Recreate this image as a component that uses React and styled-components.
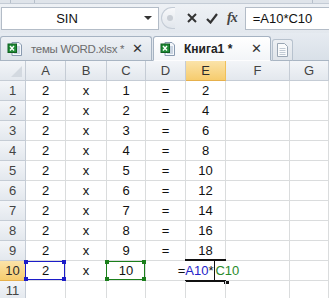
import React from 'react';
import styled, { createGlobalStyle } from 'styled-components';

const GlobalStyle = createGlobalStyle`
  html, body { margin: 0; padding: 0; background: #fff; }
  body { font-family: "Liberation Sans", Arial, sans-serif; }
`;

const Page = styled.div`
  width: 329px;
  height: 298px;
  overflow: hidden;
  background: #fff;
  display: flex;
  flex-direction: column;
`;

const TopStrip = styled.div`
  height: 4px;
  flex: none;
  background: #dfe4ea;
  border-bottom: 1px solid #c3cbd5;
  display: flex;
  box-sizing: border-box;
`;

const StripCell = styled.div`
  width: ${p => p.$w}px;
  border-right: 1px solid #b6bfca;
`;

const FormulaBar = styled.div`
  height: 29px;
  flex: none;
  box-sizing: border-box;
  display: flex;
  align-items: center;
  padding: 2px 0 3px 1px;
  background: linear-gradient(#eef1f5, #e3e8ee);
`;

const NameBox = styled.div`
  width: 158px;
  height: 23px;
  box-sizing: border-box;
  background: #fff;
  border: 1px solid #b3bcc7;
  display: flex;
  align-items: center;
  font-size: 13px;
  color: #111;
`;

const NameText = styled.span`
  flex: 1;
  text-align: center;
  padding-right: 12px;
`;

const DropArrow = styled.span`
  width: 0;
  height: 0;
  margin-right: 6px;
  border-left: 4px solid transparent;
  border-right: 4px solid transparent;
  border-top: 4px solid #333;
`;

const Grip = styled.div`
  width: 14px;
  height: 22px;
  margin-left: 2px;
  box-sizing: border-box;
  border: 1px solid #c4ccd6;
  border-radius: 11px 0 0 11px;
  border-right: none;
  background: linear-gradient(#f7f8fa, #e1e6ec);
  display: flex;
  align-items: center;
  justify-content: center;
  &::after {
    content: '';
    width: 6px;
    height: 6px;
    border-radius: 50%;
    background: #c9ced5;
    margin-left: 3px;
  }
`;

const BarButtons = styled.div`
  display: flex;
  align-items: center;
  gap: 9px;
  padding: 0 8px 0 12px;
  height: 22px;
`;

const FxText = styled.span`
  font-family: "Liberation Serif", "Times New Roman", serif;
  font-style: italic;
  font-weight: bold;
  font-size: 14px;
  color: #444;
  letter-spacing: -1px;
`;

const FormulaInput = styled.div`
  flex: 1;
  height: 23px;
  box-sizing: border-box;
  background: #fff;
  border: 1px solid #b3bcc7;
  border-right: none;
  display: flex;
  align-items: center;
  padding-left: 7px;
  font-size: 13px;
  color: #111;
`;

const TabBar = styled.div`
  height: 28px;
  flex: none;
  box-sizing: border-box;
  display: flex;
  align-items: flex-end;
  background: linear-gradient(#e6ebf1, #d9e0e8);
  border-bottom: 1px solid #a9b5c3;
`;

const Tab = styled.div`
  width: ${p => p.$w}px;
  height: 25px;
  flex: none;
  box-sizing: border-box;
  margin-bottom: -1px;
  margin-right: 1px;
  display: flex;
  align-items: center;
  gap: 8px;
  padding: 0 8px 0 6px;
  border: 1px solid #a6b3c2;
  border-bottom: ${p => (p.$active ? '1px solid #fdfdfe' : '1px solid #a9b5c3')};
  border-radius: 3px 3px 0 0;
  background: ${p => (p.$active ? 'linear-gradient(#ffffff, #f3f5f8)' : 'linear-gradient(#eef1f5, #dde3ea)')};
  font-size: 12px;
  color: ${p => (p.$active ? '#222' : '#6d6d6d')};
  font-weight: ${p => (p.$active ? 'bold' : 'normal')};
  svg { flex: none; }
`;

const TabLabel = styled.span`
  flex: 1;
  min-width: 0;
  white-space: nowrap;
  font-size: ${p => (p.$small ? '11.5px' : '12px')};
  letter-spacing: ${p => (p.$small ? '-0.3px' : '0')};
`;

const TabClose = styled.span`
  flex: none;
  font-size: 13px;
  color: #333;
  font-weight: normal;
`;

const NewTab = styled.div`
  width: 21px;
  height: 22px;
  box-sizing: border-box;
  margin-bottom: -1px;
  border: 1px solid #b7c2ce;
  border-bottom: 1px solid #a9b5c3;
  border-radius: 3px 3px 0 0;
  background: linear-gradient(#edf0f4, #dfe4ea);
  display: flex;
  align-items: center;
  justify-content: center;
`;

const Sheet = styled.div`
  display: grid;
  grid-template-columns: 26px 40px 41px 39px 40px 40px 64px 1fr;
  grid-auto-rows: 20px;
  flex: none;
`;

const Corner = styled.div`
  box-sizing: border-box;
  background: linear-gradient(#f3f5f8, #e3e8ee);
  border-right: 1px solid #c5ccd5;
  border-bottom: 1px solid #c5ccd5;
  position: relative;
  &::after {
    content: '';
    position: absolute;
    right: 3px;
    bottom: 3px;
    border-left: 11px solid transparent;
    border-bottom: 11px solid #d3d9e0;
  }
`;

const Head = styled.div`
  box-sizing: border-box;
  display: flex;
  align-items: center;
  justify-content: center;
  font-size: 13px;
  color: ${p => (p.$sel ? '#2b2b2b' : '#444')};
  background: ${p => (p.$sel ? 'linear-gradient(#fbe3a9, #f6cc6e)' : 'linear-gradient(#f3f5f8, #e3e8ee)')};
  border-right: 1px solid ${p => (p.$sel ? '#f0c05a' : '#c5ccd5')};
  border-bottom: 1px solid ${p => (p.$sel ? '#e6b04c' : '#c5ccd5')};
`;

const Cell = styled.div`
  box-sizing: border-box;
  position: relative;
  display: flex;
  align-items: center;
  justify-content: center;
  white-space: nowrap;
  font-size: 13px;
  color: #111;
  border-right: 1px solid ${p => (p.$noRight ? 'transparent' : '#dadcdd')};
  border-bottom: 1px solid #dadcdd;
`;

const RefBox = styled.div`
  position: absolute;
  left: -1px;
  top: 0;
  right: 0;
  bottom: 0;
  border: 1px solid ${p => p.$color};
  pointer-events: none;
`;

const Handle = styled.span`
  position: absolute;
  width: 4px;
  height: 4px;
  background: ${p => p.$color};
  ${p => (p.$top ? 'top: -2px;' : 'bottom: -2px;')}
  ${p => (p.$left ? 'left: -2px;' : 'right: -2px;')}
`;

const EditLine = styled.div`
  position: absolute;
  left: -1px;
  right: -1px;
  height: 2px;
  background: #111;
  ${p => (p.$top ? 'top: -2px;' : 'bottom: -2px;')}
`;

const FillHandle = styled.span`
  position: absolute;
  right: -4px;
  bottom: -4px;
  width: 5px;
  height: 4px;
  background: #111;
`;

const EditText = styled.span`
  position: relative;
  z-index: 1;
  display: flex;
  align-items: center;
  margin-left: 6px;
`;

const Part = styled.span`
  color: ${p => p.$color || '#111'};
`;

const Caret = styled.span`
  display: inline-block;
  width: 1px;
  height: 22px;
  margin: 0 0 0 1px;
  background: #111;
`;

const XlsIcon = () => (
  <svg width="16" height="16" viewBox="0 0 16 16">
    <path d="M5 1.5h7l2.5 2.5v10.5H5z" fill="#f4f7fb" stroke="#8a9bb0" />
    <path d="M7 6h6M7 8h6M7 10h6M7 12h6" stroke="#9fb1c6" strokeWidth="1" />
    <rect x="1" y="3" width="8.5" height="8.5" fill="#1f8a35" stroke="#0f5f20" />
    <path d="M3 5l4 4.5M7 5l-4 4.5" stroke="#fff" strokeWidth="1.4" />
  </svg>
);

const DocIcon = () => (
  <svg width="11" height="14" viewBox="0 0 11 14">
    <path d="M0.5 0.5h7l3 3v10h-10z" fill="#fafbfc" stroke="#9aa6b4" />
    <path d="M2.5 5.5h6M2.5 7.5h6M2.5 9.5h6M2.5 11.5h6" stroke="#c1cad4" />
  </svg>
);

const cols = ['A', 'B', 'C', 'D', 'E', 'F', 'G'];

const RefCell = ({ value, color }) => (
  <Cell>
    {value}
    <RefBox $color={color}>
      <Handle $color={color} $top $left />
      <Handle $color={color} $top />
      <Handle $color={color} $left />
      <Handle $color={color} />
    </RefBox>
  </Cell>
);

export default function App() {
  const rows = [];
  for (let r = 1; r <= 11; r++) {
    const isSel = r === 10;
    const data =
      r <= 9
        ? ['2', 'x', String(r), '=', String(2 * r), '', '']
        : r === 10
        ? ['2', 'x', '10', '', null, '', '']
        : ['', '', '', '', '', '', ''];
    rows.push(
      <Head key={`h${r}`} $sel={isSel}>
        {r}
      </Head>
    );
    data.forEach((v, i) => {
      const key = `${r}-${i}`;
      if (r === 10 && i === 0) {
        rows.push(<RefCell key={key} value={v} color="#1c1cc8" />);
      } else if (r === 10 && i === 2) {
        rows.push(<RefCell key={key} value={v} color="#1b7f1b" />);
      } else if (r === 10 && i === 4) {
        rows.push(
          <Cell key={key} $noRight>
            <EditLine $top />
            <EditText>
              <Part>=</Part>
              <Part $color="#2323c8">A10</Part>
              <Part>*</Part>
              <Caret />
              <Part $color="#2a8a2a">C10</Part>
            </EditText>
            <EditLine />
            <FillHandle />
          </Cell>
        );
      } else {
        rows.push(
          <Cell key={key} $noRight={r === 10 && i === 3}>
            {v}
          </Cell>
        );
      }
    });
  }

  return (
    <Page>
      <GlobalStyle />
      <TopStrip>
        <StripCell $w={10} />
        <StripCell $w={23} />
        <StripCell $w={277} />
      </TopStrip>
      <FormulaBar>
        <NameBox>
          <NameText>SIN</NameText>
          <DropArrow />
        </NameBox>
        <Grip />
        <BarButtons>
          <svg width="10" height="10" viewBox="0 0 10 10">
            <path d="M1 1l8 8M9 1l-8 8" stroke="#333" strokeWidth="2" />
          </svg>
          <svg width="12" height="11" viewBox="0 0 12 11">
            <path d="M1 6l3.5 3.5L11 1" stroke="#333" strokeWidth="2.2" fill="none" />
          </svg>
          <FxText>fx</FxText>
        </BarButtons>
        <FormulaInput>=A10*C10</FormulaInput>
      </FormulaBar>
      <TabBar>
        <Tab $w={152}>
          <XlsIcon />
          <TabLabel $small>темы WORD.xlsx *</TabLabel>
          <TabClose>✕</TabClose>
        </Tab>
        <Tab $w={118} $active>
          <XlsIcon />
          <TabLabel>Книга1 *</TabLabel>
          <TabClose>✕</TabClose>
        </Tab>
        <NewTab>
          <DocIcon />
        </NewTab>
      </TabBar>
      <Sheet>
        <Corner />
        {cols.map(c => (
          <Head key={c} $sel={c === 'E'}>
            {c}
          </Head>
        ))}
        {rows}
      </Sheet>
    </Page>
  );
}
